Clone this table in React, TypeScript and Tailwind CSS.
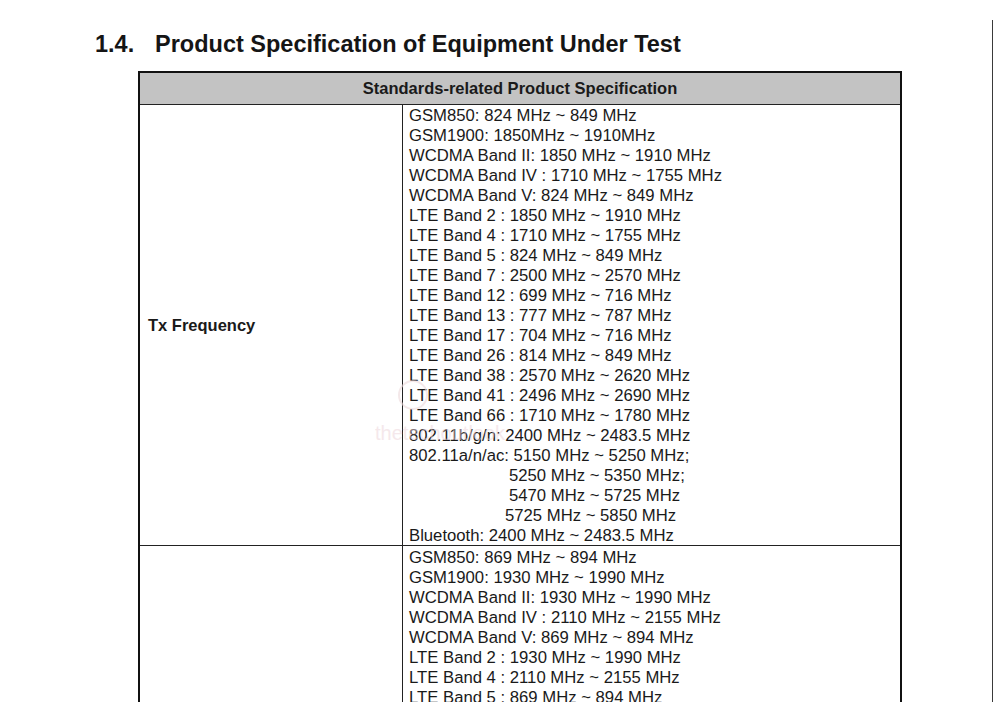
const txLines: { text: string; indent?: number }[] = [
  { text: 'GSM850: 824 MHz ~ 849 MHz' },
  { text: 'GSM1900: 1850MHz ~ 1910MHz' },
  { text: 'WCDMA Band II: 1850 MHz ~ 1910 MHz' },
  { text: 'WCDMA Band IV : 1710 MHz ~ 1755 MHz' },
  { text: 'WCDMA Band V: 824 MHz ~ 849 MHz' },
  { text: 'LTE Band 2 : 1850 MHz ~ 1910 MHz' },
  { text: 'LTE Band 4 : 1710 MHz ~ 1755 MHz' },
  { text: 'LTE Band 5 : 824 MHz ~ 849 MHz' },
  { text: 'LTE Band 7 : 2500 MHz ~ 2570 MHz' },
  { text: 'LTE Band 12 : 699 MHz ~ 716 MHz' },
  { text: 'LTE Band 13 : 777 MHz ~ 787 MHz' },
  { text: 'LTE Band 17 : 704 MHz ~ 716 MHz' },
  { text: 'LTE Band 26 : 814 MHz ~ 849 MHz' },
  { text: 'LTE Band 38 : 2570 MHz ~ 2620 MHz' },
  { text: 'LTE Band 41 : 2496 MHz ~ 2690 MHz' },
  { text: 'LTE Band 66 : 1710 MHz ~ 1780 MHz' },
  { text: '802.11b/g/n: 2400 MHz ~ 2483.5 MHz' },
  { text: '802.11a/n/ac: 5150 MHz ~ 5250 MHz;' },
  { text: '5250 MHz ~ 5350 MHz;', indent: 100 },
  { text: '5470 MHz ~ 5725 MHz', indent: 100 },
  { text: '5725 MHz ~ 5850 MHz', indent: 96 },
  { text: 'Bluetooth: 2400 MHz ~ 2483.5 MHz' },
];

const rxLines = [
  'GSM850: 869 MHz ~ 894 MHz',
  'GSM1900: 1930 MHz ~ 1990 MHz',
  'WCDMA Band II: 1930 MHz ~ 1990 MHz',
  'WCDMA Band IV : 2110 MHz ~ 2155 MHz',
  'WCDMA Band V: 869 MHz ~ 894 MHz',
  'LTE Band 2 : 1930 MHz ~ 1990 MHz',
  'LTE Band 4 : 2110 MHz ~ 2155 MHz',
  'LTE Band 5 : 869 MHz ~ 894 MHz',
];

export default function App() {
  return (
    <div
      className="relative w-[994px] h-[702px] overflow-hidden bg-white text-[#1a1a1a]"
      style={{ fontFamily: '"Liberation Sans", Arial, sans-serif' }}
    >
      <div className="pt-[20px]">
        <div className="w-[993px] h-[682px] border-r border-[#3a3a3a]">
          <div className="pt-[12px] pl-[95px] flex text-[23.5px] leading-[24px] font-bold text-[#151515]">
            <span className="w-[60px]">1.4.</span>
            <span>Product Specification of Equipment Under Test</span>
          </div>

          <div className="mt-[15px] ml-[138px] w-[764px] border-x-2 border-t-2 border-[#111]">
            <div className="h-[32px] bg-[#c3c3c3] border-b border-[#222] flex items-center justify-center text-[16.5px] font-bold">
              Standards-related Product Specification
            </div>

            <div className="flex h-[441px] border-b border-[#222]">
              <div className="w-[263px] shrink-0 border-r border-[#222] flex items-center pl-[8px] text-[16.5px] font-bold">
                Tx Frequency
              </div>
              <div className="pl-[6px] pt-px text-[16.7px] leading-[20px] whitespace-nowrap">
                {txLines.map((l) => (
                  <div key={l.text} style={l.indent ? { paddingLeft: l.indent } : undefined}>
                    {l.text}
                  </div>
                ))}
              </div>
            </div>

            <div className="flex h-[200px]">
              <div className="w-[263px] shrink-0 border-r border-[#222]" />
              <div className="pl-[6px] pt-[2px] text-[16.7px] leading-[20px] whitespace-nowrap">
                {rxLines.map((l) => (
                  <div key={l}>{l}</div>
                ))}
              </div>
            </div>
          </div>
        </div>
      </div>

      {/* faint watermark */}
      <div className="absolute left-[398px] top-[380px] w-[30px] h-[30px] rounded-full border-2 border-[#ecd8db] opacity-60 pointer-events-none" />
      <div className="absolute left-[375px] top-[418px] text-[20px] text-[#ecd3d8] opacity-50 pointer-events-none">
        thetechoutlook
      </div>
    </div>
  );
}
